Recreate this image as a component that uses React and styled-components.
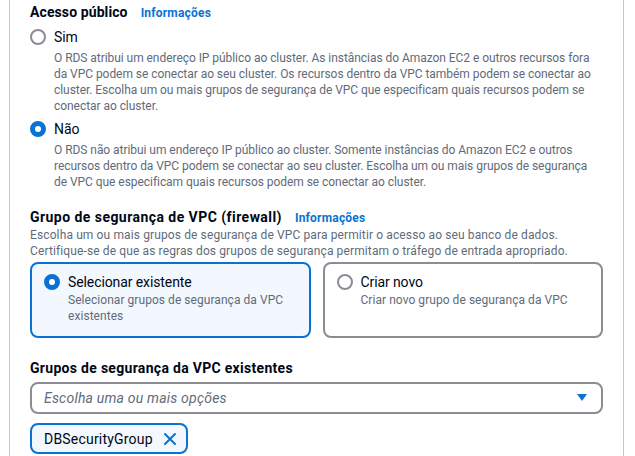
import React from 'react';
import styled, { createGlobalStyle } from 'styled-components';

const GlobalStyle = createGlobalStyle`
  body {
    margin: 0;
    background: #ffffff;
    font-family: Roboto, "Noto Sans", Arial, sans-serif;
    color: #000716;
  }
`;

const Panel = styled.div`
  margin-left: 9px;
  width: 573px;
  padding: 2px 20px 0 20px;
  border-left: 1px solid #c6c6cd;
  border-right: 1px solid #c6c6cd;
  min-height: 454px;
`;

const Section = styled.div`
  margin-top: ${(p) => p.$top || 0}px;
`;

const Title = styled.div`
  font-size: 14px;
  font-weight: 700;
  line-height: ${(p) => p.$lh || 20}px;
  letter-spacing: ${(p) => p.$ls || 0}px;
  display: flex;
  gap: 13px;
  align-items: baseline;
`;

const InfoLink = styled.span`
  font-size: 12px;
  font-weight: 700;
  color: #0972d3;
  letter-spacing: 0.2px;
`;

const Desc = styled.div`
  font-size: 12px;
  line-height: 16px;
  color: #5f6b7a;
  letter-spacing: ${(p) => (p.$ls !== undefined ? p.$ls : -0.05)}px;
  white-space: nowrap;
`;

const RadioGroup = styled.div`
  display: flex;
  flex-direction: column;
  gap: 5px;
  margin-top: 4px;
`;

const Option = styled.label`
  display: grid;
  grid-template-columns: 16px 1fr;
  column-gap: 8px;
  align-items: start;
`;

const Radio = styled.span`
  width: 16px;
  height: 16px;
  box-sizing: border-box;
  border-radius: 50%;
  margin-top: 2px;
  border: ${(p) => (p.$checked ? '5px solid #0972d3' : '2px solid #8c8c94')};
  background: #ffffff;
`;

const OptionText = styled.div`
  display: flex;
  flex-direction: column;
`;

const Label = styled.div`
  font-size: 14px;
  line-height: 20px;
  color: #000716;
  margin-bottom: 3px;
  letter-spacing: -0.1px;
`;

const Cards = styled.div`
  display: grid;
  grid-template-columns: 1fr 1fr;
  gap: 12px;
  margin-top: 3px;
`;

const Card = styled.div`
  border: 2px solid ${(p) => (p.$selected ? '#0972d3' : '#8c8c94')};
  background: ${(p) => (p.$selected ? '#f2f8fd' : '#ffffff')};
  border-radius: 8px;
  padding: 8px 12px 12px 12px;
`;

const CardLabel = styled(Label)`
  margin-bottom: 0;
`;

const Select = styled.div`
  margin-top: 4px;
  height: 32px;
  box-sizing: border-box;
  border: 2px solid #8c8c94;
  border-radius: 8px;
  display: flex;
  align-items: center;
  justify-content: space-between;
  padding: 0 14px 0 12px;
`;

const Placeholder = styled.span`
  font-size: 14px;
  font-style: italic;
  color: #5f6b7a;
  letter-spacing: 0.2px;
`;

const Caret = styled.svg`
  width: 10px;
  height: 8px;
  display: block;
`;

const Token = styled.div`
  margin-top: 9px;
  display: inline-flex;
  align-items: center;
  gap: 10px;
  height: 31px;
  box-sizing: border-box;
  border: 2px solid #0972d3;
  background: #f2f8fd;
  border-radius: 8px;
  padding: 0 9px 0 12px;
  font-size: 14px;
  color: #000716;
  letter-spacing: 0.2px;
`;

const CloseIcon = styled.svg`
  width: 14px;
  height: 14px;
  display: block;
`;

function RadioOption({ checked, label, lines }) {
  return (
    <Option>
      <Radio $checked={checked} />
      <OptionText>
        <Label>{label}</Label>
        {lines.map((l) => (
          <Desc key={l}>{l}</Desc>
        ))}
      </OptionText>
    </Option>
  );
}

function ChoiceCard({ selected, label, lines }) {
  return (
    <Card $selected={selected}>
      <Option>
        <Radio $checked={selected} />
        <OptionText>
          <CardLabel>{label}</CardLabel>
          {lines.map((l) => (
            <Desc key={l} $ls={0.05}>{l}</Desc>
          ))}
        </OptionText>
      </Option>
    </Card>
  );
}

const simLines = [
  'O RDS atribui um endereço IP público ao cluster. As instâncias do Amazon EC2 e outros recursos fora',
  'da VPC podem se conectar ao seu cluster. Os recursos dentro da VPC também podem se conectar ao',
  'cluster. Escolha um ou mais grupos de segurança de VPC que especificam quais recursos podem se',
  'conectar ao cluster.',
];

const naoLines = [
  'O RDS não atribui um endereço IP público ao cluster. Somente instâncias do Amazon EC2 e outros',
  'recursos dentro da VPC podem se conectar ao seu cluster. Escolha um ou mais grupos de segurança',
  'de VPC que especificam quais recursos podem se conectar ao cluster.',
];

export default function App() {
  return (
    <>
      <GlobalStyle />
      <Panel>
        <Section>
          <Title $ls={0.1}>
            Acesso público <InfoLink>Informações</InfoLink>
          </Title>
          <RadioGroup>
            <RadioOption label="Sim" lines={simLines} />
            <RadioOption checked label="Não" lines={naoLines} />
          </RadioGroup>
        </Section>

        <Section $top={18}>
          <Title $lh={18} $ls={0.45}>
            Grupo de segurança de VPC (firewall) <InfoLink>Informações</InfoLink>
          </Title>
          <Desc $ls={0.12}>
            Escolha um ou mais grupos de segurança de VPC para permitir o acesso ao seu banco de dados.
          </Desc>
          <Desc $ls={0.12}>
            Certifique-se de que as regras dos grupos de segurança permitam o tráfego de entrada apropriado.
          </Desc>
          <Cards>
            <ChoiceCard
              selected
              label="Selecionar existente"
              lines={['Selecionar grupos de segurança da VPC', 'existentes']}
            />
            <ChoiceCard label="Criar novo" lines={['Criar novo grupo de segurança da VPC']} />
          </Cards>
        </Section>

        <Section $top={20}>
          <Title $ls={0.3}>Grupos de segurança da VPC existentes</Title>
          <Select>
            <Placeholder>Escolha uma ou mais opções</Placeholder>
            <Caret viewBox="0 0 10 8">
              <path d="M0 0 H10 L5 7 Z" fill="#0972d3" />
            </Caret>
          </Select>
          <Token>
            DBSecurityGroup
            <CloseIcon viewBox="0 0 14 14">
              <path d="M2 2 L12 12 M12 2 L2 12" stroke="#0972d3" strokeWidth="2" strokeLinecap="round" />
            </CloseIcon>
          </Token>
        </Section>
      </Panel>
    </>
  );
}
